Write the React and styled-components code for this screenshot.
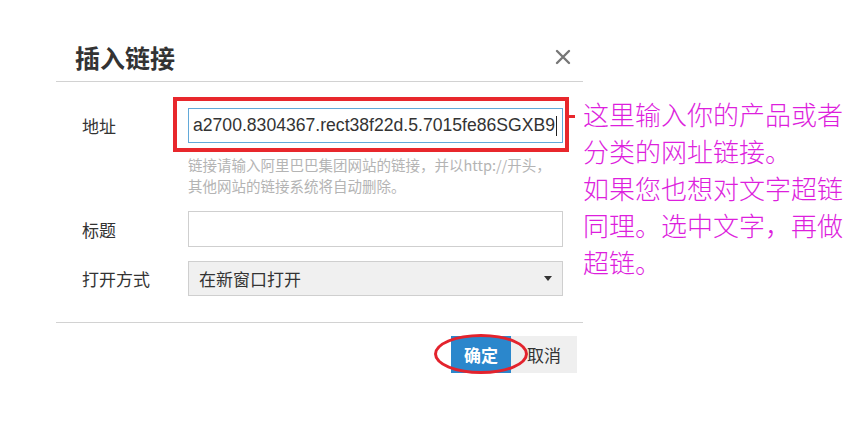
import React from 'react'
import styled, { createGlobalStyle } from 'styled-components';

const GlobalStyle = createGlobalStyle`
html, body {
  margin:0;
  padding:0;
  background:#fff;
}
body {
  font-family: "Noto Sans CJK SC", "Noto Sans", sans-serif;
}
`

const Page = styled.div`
width:850px;
height:421px;
display:flex;
align-items:flex-start;
overflow:hidden;
background:#fff;
`
const Dialog = styled.div`
margin-left:56px;
width:527px;
flex-shrink:0;
display:flex;
flex-direction:column;
`
const Header = styled.div`
display:flex;
align-items:center;
justify-content:space-between;
padding:40px 12px 7px 19px;
border-bottom:1px solid #d2d2d2;
`
const Title = styled.h2`
margin:0;
font-size:25px;
line-height:34px;
font-weight:700;
color:#333;
`
const Close = styled.button`
border:0;
background:none;
padding:0;
width:16px;
height:16px;
display:flex;
cursor:pointer;
`
const Body = styled.div`
display:flex;
flex-direction:column;
padding:26px 0 26px 26px;
`
const Row = styled.div`
display:flex;
align-items:center;
margin-top:${p => p.$gap || 0}px;
`
const Label = styled.div`
width:106px;
flex-shrink:0;
font-size:17px;
color:#333;
`
const Field = styled.div`
position:relative;
box-sizing:border-box;
width:375px;
height:${p => p.$h || 36}px;
display:flex;
align-items:center;
justify-content:space-between;
padding:0 ${p => p.$padR ?? 10}px 0 ${p => p.$pad || 10}px;
border:1px solid ${p => p.$active ? '#62a9d9' : '#cfcfcf'};
background:${p => p.$fill ? '#f0f0f0' : '#fff'};
font-size:17px;
color:#333;
`
const Url = styled.span`
font-family: "Liberation Sans", Arial, sans-serif;
font-size:17.6px;
white-space:nowrap;
`
const Caret = styled.span`
display:inline-block;
width:1px;
height:20px;
background:#222;
margin-left:1px;
vertical-align:middle;
`
const Highlight = styled.div`
position:absolute;
top:-12px;
left:-16px;
right:-7px;
bottom:-10px;
border:4px solid #e8272c;
pointer-events:none;
&::after{
  content:"";
  position:absolute;
  left:100%;
  top:14px;
  width:10px;
  height:3px;
  background:#e8272c;
}
`
const Hint = styled.p`
margin:11px 0 0 106px;
font-size:14.5px;
line-height:21px;
color:#b4b4b4;
`
const Arrow = styled.span`
width:0;
height:0;
border-left:4px solid transparent;
border-right:4px solid transparent;
border-top:5px solid #333;
`
const Footer = styled.div`
display:flex;
justify-content:flex-end;
padding:13px 6px 0 0;
border-top:1px solid #d2d2d2;
`
const Button = styled.button`
position:relative;
height:37px;
padding:0 ${p => p.$primary ? 13 : 16}px;
border:0;
font-family: "Noto Sans CJK SC", sans-serif;
font-size:17px;
font-weight:${p => p.$primary ? 700 : 400};
color:${p => p.$primary ? '#fff' : '#333'};
background:${p => p.$primary ? '#2b87cc' : '#efefef'};
cursor:pointer;
`
const Ring = styled.span`
position:absolute;
top:-2px;
bottom:-1px;
left:-17px;
right:-17px;
border:3px solid #e3232d;
border-radius:50%;
z-index:2;
pointer-events:none;
`
const Note = styled.div`
margin-top:95px;
font-size:26px;
font-weight:300;
line-height:37px;
color:#dd1fdd;
white-space:nowrap;
`

const CloseIcon = () => (
  <svg width="16" height="16" viewBox="0 0 16 16">
    <path d="M2 2 L14 14 M14 2 L2 14" stroke="#777" strokeWidth="2.4" strokeLinecap="round" />
  </svg>
)

export default function App() {
  return (
    <>
      <GlobalStyle />
      <Page>
        <Dialog>
          <Header>
            <Title>插入链接</Title>
            <Close aria-label="关闭"><CloseIcon /></Close>
          </Header>
          <Body>
            <Row>
              <Label>地址</Label>
              <Field $active $h={35} $pad={4} $padR={2}>
                <Url>a2700.8304367.rect38f22d.5.7015fe86SGXB9<Caret /></Url>
                <Highlight />
              </Field>
            </Row>
            <Hint>
              链接请输入阿里巴巴集团网站的链接，并以http://开头，<br />
              其他网站的链接系统将自动删除。
            </Hint>
            <Row $gap={15}>
              <Label>标题</Label>
              <Field />
            </Row>
            <Row $gap={14}>
              <Label>打开方式</Label>
              <Field $fill $h={35}>
                <span>在新窗口打开</span>
                <Arrow />
              </Field>
            </Row>
          </Body>
          <Footer>
            <Button $primary>确定<Ring /></Button>
            <Button>取消</Button>
          </Footer>
        </Dialog>
        <Note>
          这里输入你的产品或者<br />
          分类的网址链接。<br />
          如果您也想对文字超链<br />
          同理。选中文字，再做<br />
          超链。
        </Note>
      </Page>
    </>
  )
}
